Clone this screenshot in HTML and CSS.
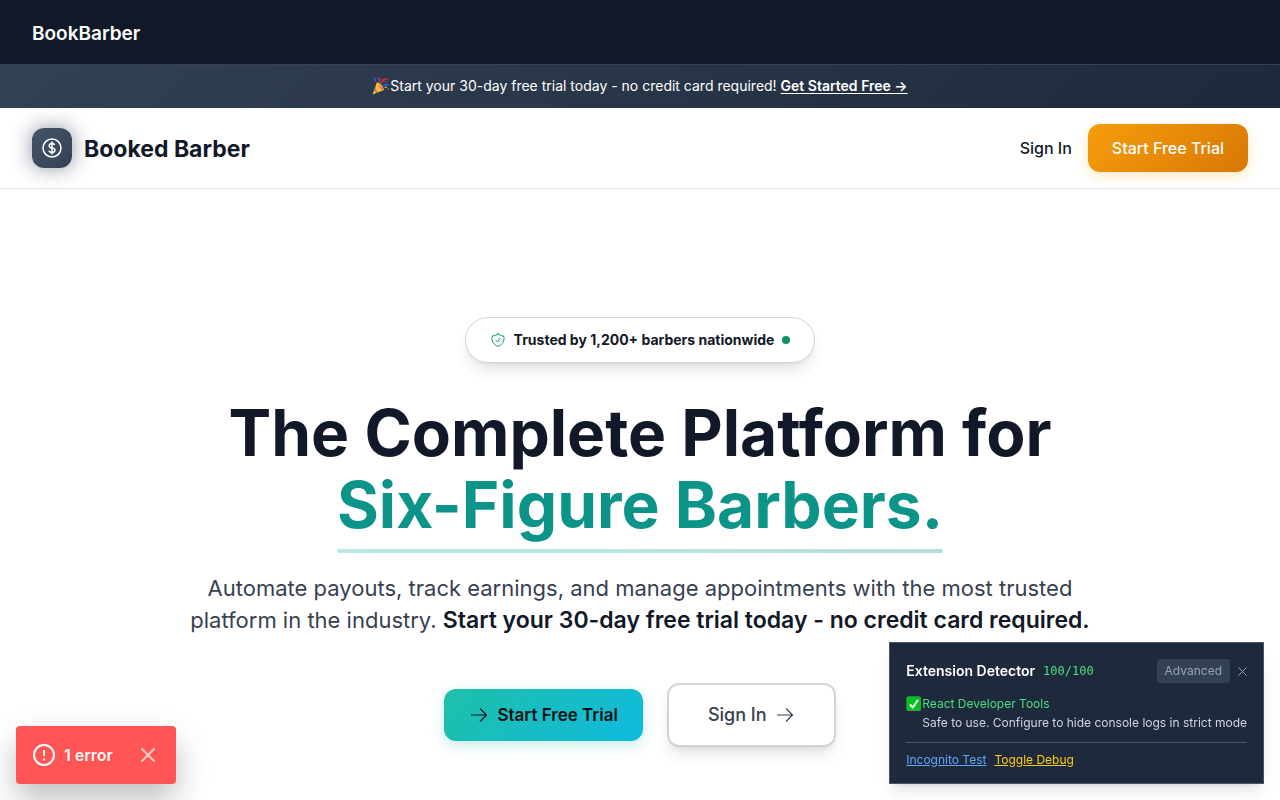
FILE: index.html
```html
<!DOCTYPE html>
<html lang="en">
<head>
<meta charset="utf-8">
<meta name="viewport" content="width=device-width, initial-scale=1">
<title>Booked Barber</title>
<link rel="stylesheet" href="styles.css">
</head>
<body>
<header class="topbar"><a class="topbar-name" href="#">BookBarber</a></header>

<div class="banner">
  <svg class="party" viewBox="0 0 18 18" aria-hidden="true">
    <path d="M0.5 17.5 5 5.5Q10.5 7 12 13Z" fill="#fbc02d"/>
    <path d="M5 5.5 3.8 8.7Q6.5 13 9 14.2L12 13Q10.5 7 5 5.5Z" fill="#fbb92a"/>
    <path d="M3 11 5.5 15.5 4.3 16 2.4 12.7ZM6 7.5Q9 10 10.5 13.7L11.5 13Q10 9 6 7.5Z" fill="#a855c7"/>
    <path d="M1 1.5Q4 1 3 4.5M11 9.5Q13 6.5 17 8" fill="none" stroke="#2563eb" stroke-width="1.3"/>
    <path d="M6 1 8 3 7 5.5M9 7Q11 2 15.5 1.5" fill="none" stroke="#c9344f" stroke-width="1.3"/>
    <path d="M13 4h1.5v1.5H13zM15.5 11.5H17V13h-1.5zM10 2h1.2v1.2H10z" fill="#c9344f"/>
    <path d="M12.5 10.5 15 10" stroke="#f6c64b"/>
  </svg>
  <span>Start your 30-day free trial today - no credit card required! <a class="banner-link" href="#">Get Started Free →</a></span>
</div>

<nav class="nav">
  <a class="brand" href="#">
    <span class="brand-mark">
      <svg viewBox="0 0 24 24" width="24" height="24" aria-hidden="true"><path d="M12 6v12m-3-2.8.9.65c1.15.9 3.05.9 4.2 0 1.2-.87 1.2-2.3 0-3.2-.58-.43-1.34-.65-2.1-.65-.72 0-1.45-.22-2-.65-1.1-.88-1.1-2.3 0-3.2 1.1-.87 2.9-.87 4 0l.42.33M21 12a9 9 0 1 1-18 0 9 9 0 0 1 18 0Z"/></svg>
    </span>
    <span class="brand-name">Booked Barber</span>
  </a>
  <div class="nav-actions">
    <a class="nav-signin" href="#">Sign In</a>
    <a class="nav-trial" href="#">Start Free Trial</a>
  </div>
</nav>

<main class="hero">
  <div class="trust">
    <svg viewBox="0 0 24 24" width="16" height="16" aria-hidden="true"><path d="m9 12.75 2.25 2.25L15 9.75m-3-7.04A11.96 11.96 0 0 1 3.6 6 12 12 0 0 0 3 9.75c0 5.6 3.82 10.3 9 11.62 5.18-1.33 9-6.03 9-11.62 0-1.31-.21-2.57-.6-3.75h-.15c-3.2 0-6.1-1.25-8.25-3.29Z"/></svg>
    <span>Trusted by 1,200+ barbers nationwide</span>
    <span class="dot"></span>
  </div>
  <h1 class="title">The Complete Platform for<br><span class="accent">Six-Figure Barbers.</span></h1>
  <p class="lead">Automate payouts, track earnings, and manage appointments with the most trusted platform in the industry. <strong>Start your 30-day free trial today - no credit card required.</strong></p>
  <div class="actions">
    <a class="cta cta-primary" href="#">
      <svg class="arrow" viewBox="0 0 24 24" aria-hidden="true"><path d="M13.5 4.5 21 12l-7.5 7.5M21 12H3"/></svg>
      Start Free Trial
    </a>
    <a class="cta cta-outline" href="#">
      Sign In
      <svg class="arrow" viewBox="0 0 24 24" aria-hidden="true"><path d="M13.5 4.5 21 12l-7.5 7.5M21 12H3"/></svg>
    </a>
  </div>
</main>

<aside class="detector">
  <div class="detector-head">
    <h2 class="detector-title">Extension Detector</h2>
    <span class="score">100/100</span>
    <button class="advanced" type="button">Advanced</button>
    <button class="detector-close" type="button" aria-label="Close detector"><svg viewBox="0 0 9 9" width="9" height="9" aria-hidden="true"><path d="m.5.5 8 8m0-8-8 8"/></svg></button>
  </div>
  <div class="extension">
    <svg class="check" viewBox="0 0 16 16" aria-hidden="true"><rect x=".5" y=".5" width="14.5" height="14.5" rx="2" fill="#00c41d"/><rect x="1" y="1" width="13.5" height="13.5" rx="1.5" fill="none" stroke="#35a647"/><path d="m4 8.5 2.7 3L12 4" fill="none" stroke="#fff" stroke-width="2"/></svg>
    <div>
      <div class="extension-name">React Developer Tools</div>
      <div class="extension-note">Safe to use. Configure to hide console logs in strict mode</div>
    </div>
  </div>
  <div class="detector-links">
    <a class="link-blue" href="#">Incognito Test</a>
    <a class="link-yellow" href="#">Toggle Debug</a>
  </div>
</aside>

<div class="toast" role="status">
  <svg viewBox="0 0 24 24" width="24" height="24" aria-hidden="true"><circle cx="12" cy="12" r="10"/><path d="M12 7v6m0 2.5v2"/></svg>
  <span>1 error</span>
  <button class="toast-close" type="button" aria-label="Close error"><svg viewBox="0 0 28 28" width="28" height="28" aria-hidden="true"><path d="m7.5 7.5 13 13m0-13-13 13"/></svg></button>
</div>
</body>
</html>
```

FILE: styles.css
```css
* { box-sizing: border-box; }
body {
  margin: 0;
  min-height: 100vh;
  background: #fff;
  color: #111827;
  font-family: Inter, "Liberation Sans", sans-serif;
  font-size: 16px;
  line-height: 24px;
}
a { color: inherit; text-decoration: none; }
button { border: 0; padding: 0; background: none; font: inherit; cursor: pointer; }
svg { display: block; flex: none; }

.topbar {
  padding: 20px 32px 16px;
  background: #111827;
  border-bottom: 1px solid #374151;
  color: #fff;
}
.topbar-name { display: block; font-size: 19px; line-height: 28px; font-weight: 600; }

.banner {
  display: flex;
  align-items: center;
  justify-content: center;
  padding: 11px 16px 12px;
  background: linear-gradient(135deg, #334155, #1e293b);
  color: #fff;
  font-size: 14px;
  line-height: 20px;
}
.party { width: 18px; height: 18px; }
.banner-link { font-weight: 600; text-decoration: underline; text-underline-offset: 2px; }

.nav {
  display: flex;
  align-items: center;
  justify-content: space-between;
  padding: 16px 32px;
  border-bottom: 1px solid #e5e7eb;
}
.brand {
  display: flex;
  align-items: center;
  gap: 12px;
}
.brand-name {
  padding-top: 2px;
  font-size: 23px;
  line-height: 32px;
  font-weight: 700;
}
.brand-mark {
  display: grid;
  place-items: center;
  width: 40px;
  height: 40px;
  border-radius: 12px;
  background: linear-gradient(135deg, #475569, #334155);
  box-shadow: 0 0 20px rgba(30, 41, 80, 0.5);
}
.brand-mark svg { fill: none; stroke: #fff; stroke-width: 1.5; stroke-linecap: round; stroke-linejoin: round; }
.nav-actions { display: flex; align-items: center; gap: 16px; }
.nav-signin { font-weight: 500; }
.nav-trial {
  padding: 12px 24px;
  border-radius: 12px;
  background: linear-gradient(135deg, #f59e0b, #d97706);
  box-shadow: 0 4px 14px rgba(245, 158, 11, 0.25);
  color: #fff;
  font-weight: 500;
}

.hero {
  display: flex;
  flex-direction: column;
  align-items: center;
  padding: 128px 32px 48px;
  text-align: center;
}
.trust {
  display: flex;
  align-items: center;
  gap: 8px;
  padding: 12px 24px;
  border: 1px solid #cbd5e1;
  border-radius: 24px;
  background: #fff;
  box-shadow: 0 10px 15px -3px rgba(0, 0, 0, 0.1), 0 4px 6px -4px rgba(0, 0, 0, 0.1);
  font-size: 14px;
  line-height: 20px;
  font-weight: 700;
}
.trust svg { fill: none; stroke: #059669; stroke-width: 1.5; stroke-linecap: round; stroke-linejoin: round; }
.dot { width: 8px; height: 8px; border-radius: 50%; background: #059669; }
.title {
  margin: 34px 0 0;
  max-width: 912px;
  font-size: 64px;
  line-height: 72px;
  font-weight: 700;
}
.accent { position: relative; display: inline-block; color: #0d9488; }
.accent::after {
  content: "";
  position: absolute;
  left: 0;
  right: 0;
  bottom: -12px;
  height: 4px;
  border-radius: 2px;
  background: linear-gradient(90deg, #14b8a6, #0d9488);
  opacity: 0.3;
}
.lead {
  margin: 31px 0 0;
  max-width: 912px;
  color: #374151;
  font-size: 22px;
  line-height: 32px;
}
.lead strong { color: #111827; font-size: 23px; font-weight: 600; }
.actions { display: flex; align-items: center; gap: 24px; margin-top: 47px; }
.cta {
  display: flex;
  align-items: center;
  gap: 8px;
  border-radius: 12px;
  font-size: 18px;
  line-height: 28px;
  font-weight: 500;
}
.arrow { width: 20px; height: 20px; fill: none; stroke: currentColor; stroke-width: 1.3; stroke-linecap: round; stroke-linejoin: round; }
.cta-primary {
  padding: 12px 25px;
  background: linear-gradient(135deg, #1fbfa8, #0fbbdf);
  box-shadow: 0 4px 14px rgba(20, 184, 166, 0.25);
  color: #0b1215;
  font-size: 17px;
  font-weight: 600;
}
.cta-outline {
  padding: 16px 39px;
  border: 2px solid #d1d5db;
  background: #fff;
  box-shadow: 0 10px 15px -3px rgba(0, 0, 0, 0.1), 0 4px 6px -4px rgba(0, 0, 0, 0.1);
  color: #374151;
}

.detector {
  position: fixed;
  right: 16px;
  bottom: 16px;
  padding: 16px;
  border: 1px solid #475569;
  background: #1e293b;
  box-shadow: 0 10px 15px -3px rgba(0, 0, 0, 0.1), 0 4px 6px -4px rgba(0, 0, 0, 0.1);
  color: #fff;
  font-size: 12px;
  line-height: 16px;
}
.detector-head { display: flex; align-items: center; gap: 8px; }
.detector-title { margin: 0; font-size: 14px; line-height: 20px; font-weight: 600; }
.score { color: #4ade80; font-family: "DejaVu Sans Mono", monospace; }
.advanced { margin-left: auto; padding: 4px 8px; border-radius: 4px; background: #334155; color: #9ca3af; }
.detector-close svg { stroke: #9ca3af; fill: none; }
.extension { display: flex; align-items: flex-start; margin-top: 13px; }
.check { width: 16px; height: 16px; }
.extension-name { color: #4ade80; }
.extension-note { margin-top: 3px; color: #d1d5db; }
.detector-links {
  display: flex;
  gap: 8px;
  margin-top: 11px;
  padding-top: 9px;
  border-top: 1px solid #475569;
  line-height: 15px;
}
.detector-links a { text-decoration: underline; }
.link-blue { color: #60a5fa; }
.link-yellow { color: #facc15; }

.toast {
  position: fixed;
  left: 16px;
  bottom: 16px;
  display: flex;
  align-items: center;
  gap: 8px;
  padding: 15px 14px 15px 16px;
  border-radius: 4px;
  background: #ff5555;
  box-shadow: 0 16px 32px rgba(0, 0, 0, 0.25);
  color: #fff;
  font-weight: 600;
}
.toast svg { fill: none; stroke: #fff; stroke-width: 2; }
.toast-close { margin-left: 13px; opacity: 0.7; }
```
